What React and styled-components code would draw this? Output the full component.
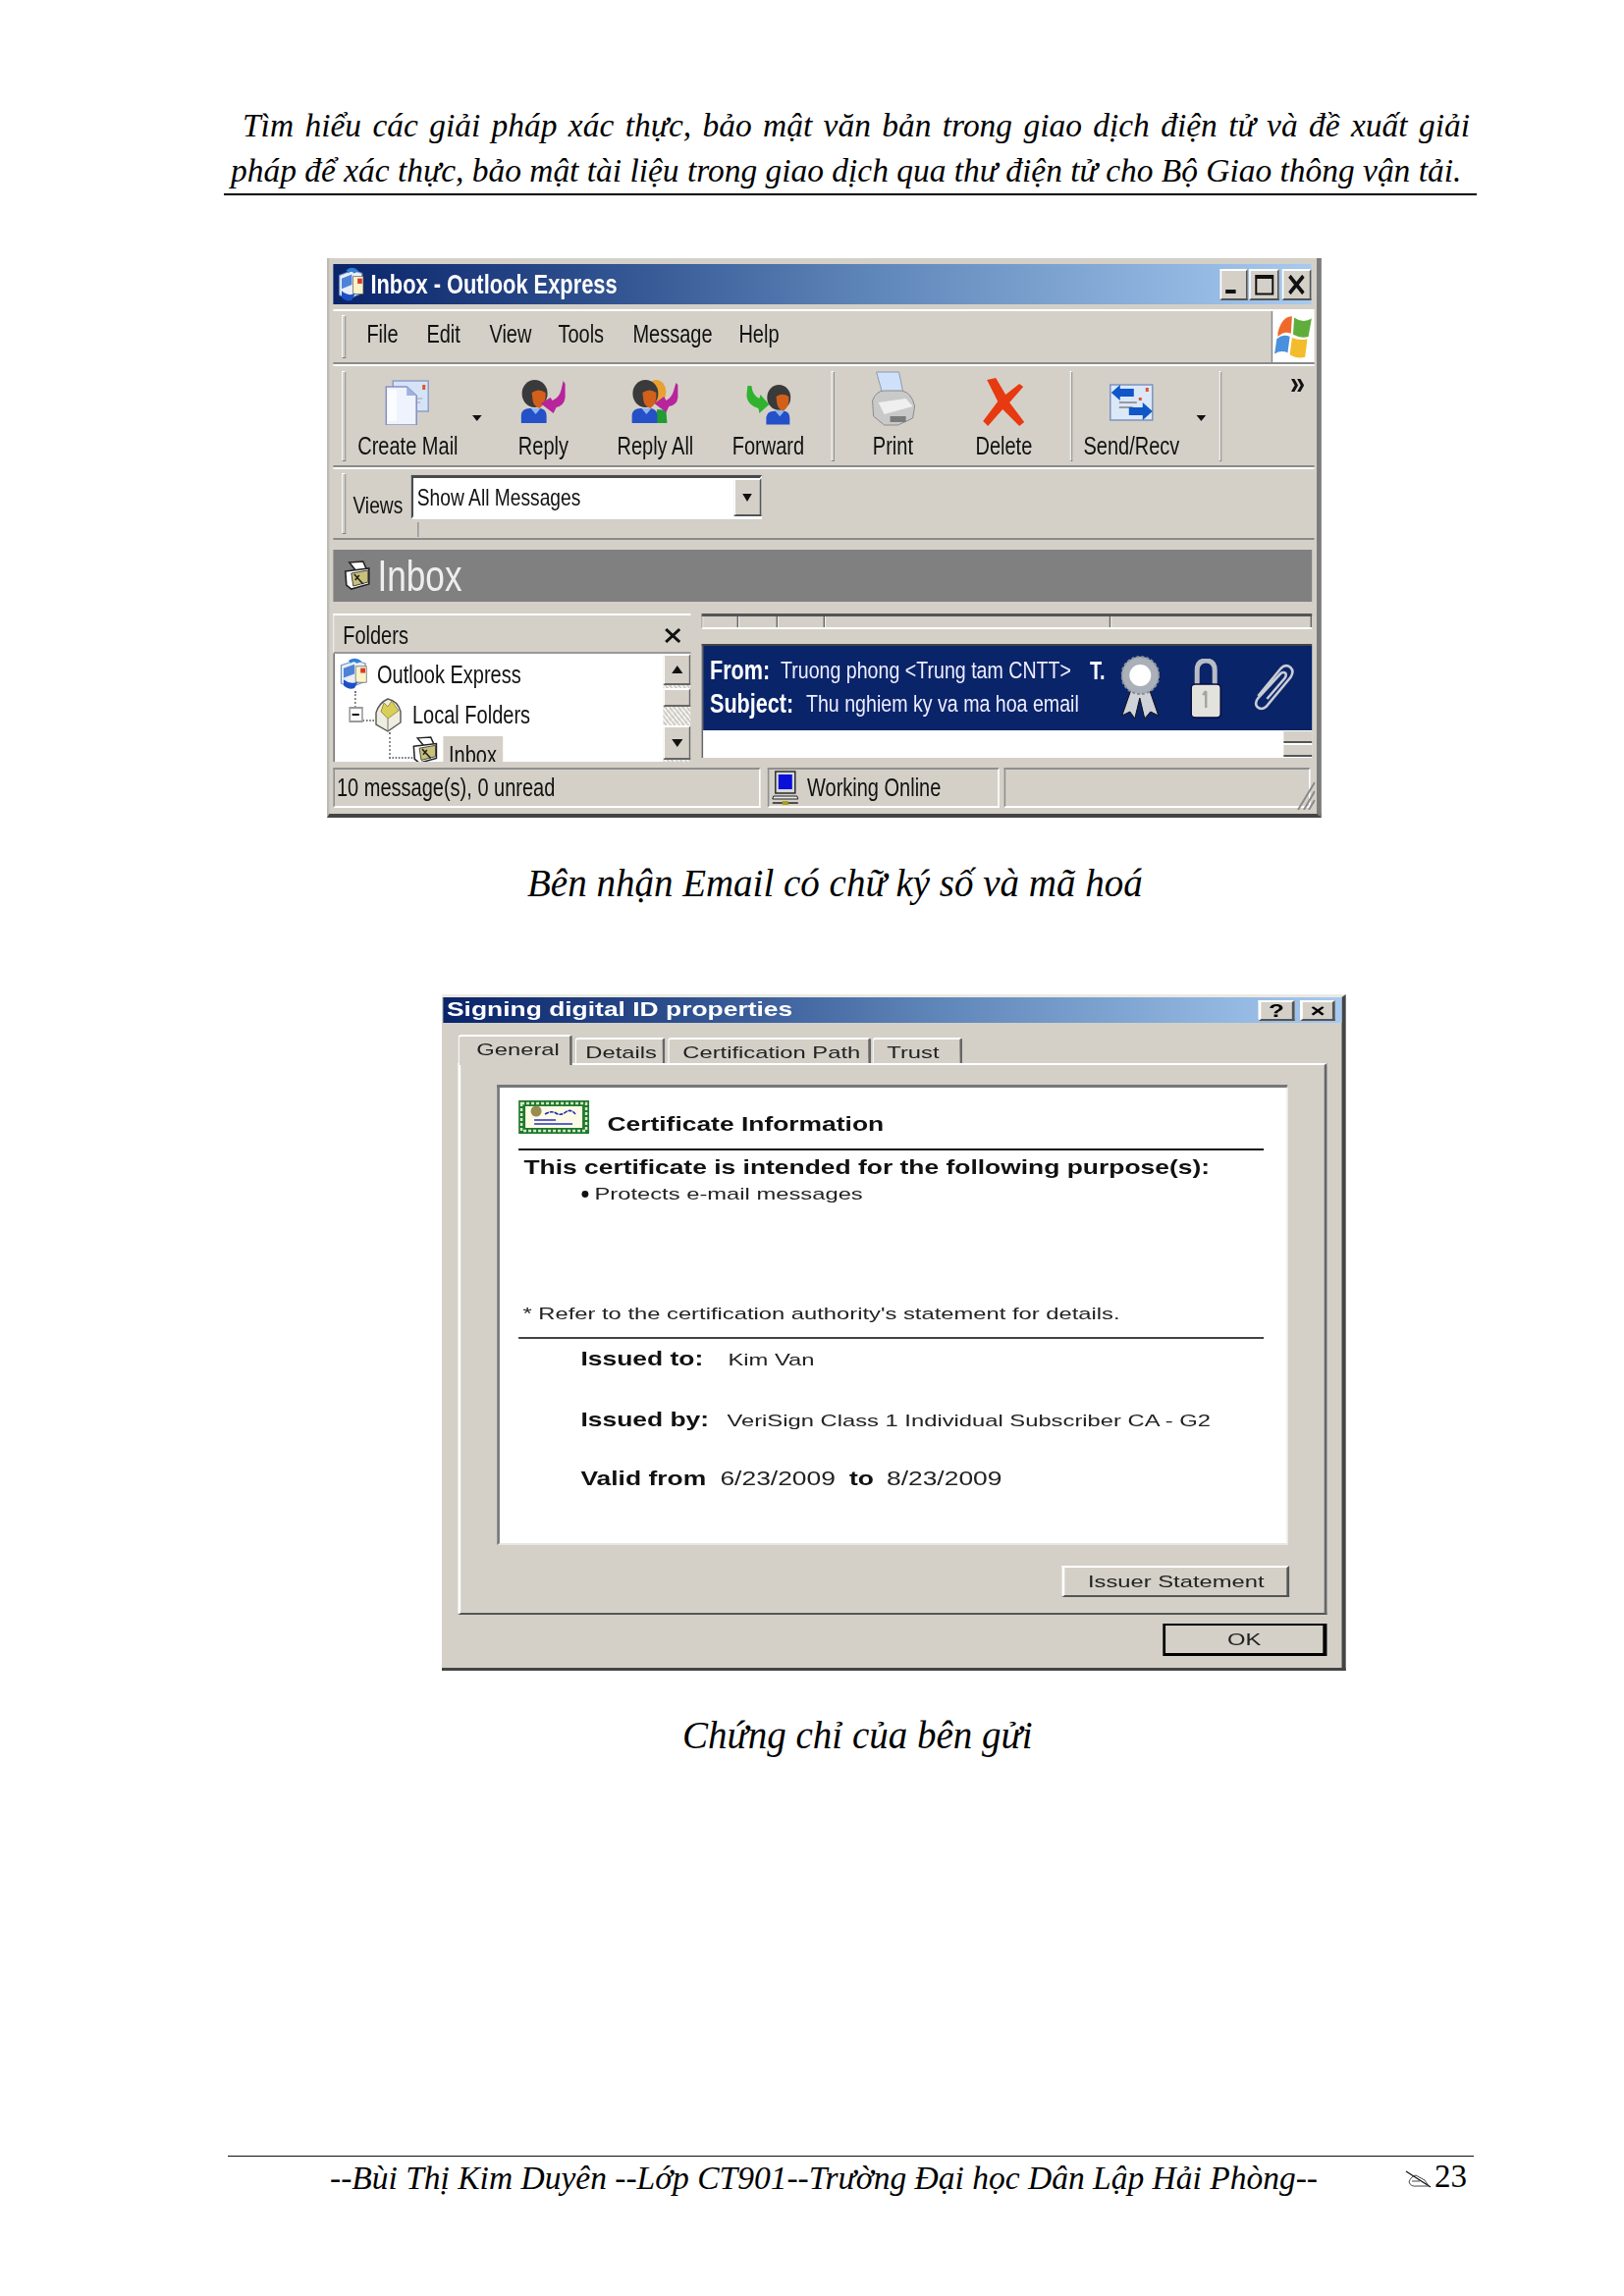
import React from "react";
import styled, { createGlobalStyle } from "styled-components";

const KO = 0.8;
const KD = 1.37;
const XO = (n) => n / KO;
const XD = (n) => n / KD;
const CHROME = "#d4d0c8";
const SANS = '"Liberation Sans", Arial, sans-serif';
const SERIF = '"Liberation Serif", "Times New Roman", serif';

const Global = createGlobalStyle`
  html, body { margin: 0; padding: 0; background: #fff; }
  * { box-sizing: border-box; }
`;

const Page = styled.div`
  width: 1654px; height: 2339px; padding-top: 105px; overflow: hidden; position: relative;
  font-family: ${SERIF}; color: #000;
`;
const RunHead = styled.header`
  width: 1276px; margin-left: 228px; border-bottom: 2px solid #000; padding: 0 7px 0 7px;
`;
const HeadLine = styled.div`
  font-size: 33.45px; line-height: 46px; font-style: italic;
  padding-left: ${(p) => p.$indent || 0}px;
  text-align: ${(p) => (p.$just ? "justify" : "left")};
  text-align-last: ${(p) => (p.$just ? "justify" : "left")};
  white-space: ${(p) => (p.$just ? "normal" : "nowrap")};
`;
const Caption = styled.div`
  margin-left: ${(p) => p.$ml}px; margin-top: ${(p) => p.$mt}px;
  height: 50px; line-height: 50px; font-size: 39px; font-style: italic; white-space: nowrap;
`;

/* ---------- Outlook window ---------- */
const OutlookFrame = styled.div`
  width: 1013px; height: 570px; margin: 64px 0 0 333px; filter: blur(0.45px);
`;
const OutlookBody = styled.div`
  width: ${XO(1013)}px; height: 570px; transform: scaleX(${KO}); transform-origin: left top;
  background: ${CHROME}; font-family: ${SANS}; font-size: 25px; color: #111;
  border-right: 6px solid #7c7c7c; border-bottom: 4px solid #444;
  border-left: ${XO(3)}px solid #bdbbb5;
  padding: 6px ${XO(1)}px 0 ${XO(4)}px; display: flex; flex-direction: column;
`;
const TitleBar = styled.div`
  height: ${(p) => p.$h}px; flex: none; width: ${(p) => p.$w}px;
  background: linear-gradient(90deg, #0a246a 0%, #2c4d8c 25%, #5f86b9 55%, #a6caf0 100%);
  display: flex; align-items: center; color: #fff; font-weight: 700;
`;
const TitleIconSlot = styled.span`
  margin-left: ${XO(4)}px; display: flex; flex: none;
`;
const TitleText = styled.span`
  font-size: 27.3px; margin-left: ${XO(4)}px; white-space: nowrap;
`;
const CaptionBtn = styled.button`
  width: ${(p) => p.$w}px; height: ${(p) => p.$h}px; padding: 0; margin-left: ${(p) => p.$ml}px;
  background: ${CHROME}; color: #000; font: 700 ${(p) => p.$fs}px ${SANS}; line-height: 1;
  border: 2px solid; border-color: #fff #555 #555 #fff;
  display: flex; align-items: center; justify-content: center; flex: none;
`;
const MinBar = styled.span`
  width: ${XO(11)}px; height: 4px; background: #111; margin: 14px ${XO(6)}px 0 0;
`;
const CaptionGroup = styled.div`
  margin-left: auto; display: flex; margin-right: ${(p) => p.$mr}px;
`;
const Band = styled.div`
  height: ${(p) => p.$h}px; margin-top: ${(p) => p.$mt || 0}px; flex: none;
  border-top: 2px solid #fff; border-bottom: 2px solid #8a8a8a;
  padding-left: ${XO(9)}px; display: flex; align-items: ${(p) => p.$align || "center"};
  margin-right: ${XO(2)}px; position: relative;
`;
const Grip = styled.span`
  width: ${XO(4)}px; height: ${(p) => p.$h}px; flex: none; align-self: center;
  margin-right: ${(p) => XO(p.$mr || 0)}px;
  border: 1px solid; border-color: #fff #808080 #808080 #fff;
`;
const MenuItem = styled.span`
  width: ${(p) => XO(p.$w)}px; margin-left: ${(p) => XO(p.$ml || 0)}px; flex: none; white-space: nowrap; padding-bottom: 6px;
`;
const LogoBox = styled.div`
  margin-left: auto; width: ${XO(44)}px; height: 52px; background: #fff; flex: none;
  border-left: ${XO(2)}px solid #8a8a8a; display: flex; align-items: center; justify-content: center;
`;
const Tool = styled.div`
  width: ${(p) => XO(p.$w)}px; height: 100%; flex: none; display: flex; flex-direction: column; align-items: center;
  padding-top: ${(p) => p.$pt}px; position: relative;
`;
const ToolIcon = styled.div`
  height: ${(p) => p.$h}px; display: flex; flex: none;
`;
const ToolLabel = styled.span`
  position: absolute; top: 67px; left: 0; right: 0; text-align: center; white-space: nowrap;
  line-height: 28px;
`;
const DropCell = styled.div`
  width: ${(p) => XO(p.$w)}px; height: 100%; flex: none; display: flex; justify-content: center; padding-top: 50px;
`;
const Tri = styled.span`
  width: 0; height: 0; border-left: ${XO(5)}px solid transparent; border-right: ${XO(5)}px solid transparent;
  border-top: ${(p) => p.$s || 6}px solid #111;
`;
const ToolSep = styled.span`
  width: ${XO(3)}px; height: 92px; flex: none; align-self: center; margin-left: ${(p) => XO(p.$ml || 0)}px;
  margin-right: ${(p) => XO(p.$mr || 0)}px; border: 1px solid; border-color: #fff #808080 #808080 #fff;
`;
const Chevrons = styled.span`
  position: absolute; right: ${XO(9)}px; top: 0; font-weight: 700; font-size: 34px; line-height: 32px;
`;
const ViewsLabel = styled.span`
  margin-left: ${XO(7)}px; margin-top: 4px; width: ${XO(59)}px; flex: none; font-size: 24px;
`;
const Combo = styled.div`
  width: ${XO(358)}px; height: 45px; margin-top: -13px; position: relative; background: #fff; flex: none; font-size: 24px;
  border: 3px solid; border-color: #4a4a4a #fff #fff #4a4a4a; outline: 1px solid #ccc;
  display: flex; align-items: center; padding-left: ${XO(4)}px;
`;
const ComboBtn = styled.span`
  margin-left: auto; width: ${XO(28)}px; height: 39px; background: ${CHROME}; flex: none; margin-right: ${XO(-1)}px;
  border: 2px solid; border-color: #fff #555 #555 #fff; display: flex; align-items: center; justify-content: center;
`;
const ComboTick = styled.span`
  position: absolute; left: ${XO(4)}px; top: 45px; width: ${XO(2)}px; height: 15px; background: #9a9a9a;
`;
const ViewBar = styled.div`
  height: 53px; margin-top: 10px; flex: none; background: #808080; color: #eee;
  display: flex; align-items: center; padding-left: ${XO(10)}px; margin-right: ${XO(4)}px;
`;
const ViewBarText = styled.span`
  font-size: 44px; margin-left: ${XO(7)}px; line-height: 1;
`;
const Panes = styled.div`
  height: 167px; flex: none; display: flex; padding-top: 12px;
`;
const FolderPane = styled.section`
  width: ${XO(364)}px; flex: none; display: flex; flex-direction: column; height: 153px;
`;
const PaneHead = styled.div`
  height: 41px; flex: none; border-top: 2px solid #fff; border-left: ${XO(1)}px solid #fff; border-bottom: 2px solid #999;
  display: flex; align-items: center; padding: 3px ${XO(9)}px 0 ${XO(9)}px; justify-content: space-between;
`;
const TreeWrap = styled.div`
  height: 110px; display: flex; overflow: hidden; border-left: ${XO(2)}px solid #777;
`;
const Tree = styled.div`
  flex: 1; background: #fff; position: relative; overflow: hidden; display: flex; flex-direction: column;
`;
const TreeRow = styled.div`
  height: 41px; flex: none; display: flex; align-items: center; padding-left: ${(p) => XO(p.$pl)}px; white-space: nowrap;
  ${(p) => p.$top && "align-items: flex-start; padding-top: 2px;"}
`;
const TreeText = styled.span`
  margin-left: ${(p) => XO(p.$ml)}px; line-height: 30px;
  ${(p) => p.$sel && `background: ${CHROME}; padding: 4px ${XO(6)}px 0;`}
`;
const TreeGap = styled.span`
  width: ${(p) => XO(p.$w)}px; flex: none;
`;
const TreeLine = styled.span`
  position: absolute; left: ${(p) => XO(p.$l)}px; top: ${(p) => p.$t}px;
  width: ${(p) => (p.$w ? `${XO(p.$w)}px` : "0")}; height: ${(p) => p.$h || 0}px;
  ${(p) => (p.$w ? "border-top" : "border-left")}: 2px dotted #777;
`;
const Expander = styled.span`
  width: ${XO(15)}px; height: 16px; flex: none; background: #fff; border: 2px solid #9a9a9a; position: relative; display: flex; align-items: center; justify-content: center;
  &::after { content: ""; width: 60%; height: 2px; background: #111; }
`;
const Scroll = styled.div`
  width: ${(p) => XO(p.$w)}px; flex: none; display: flex; flex-direction: column; background: #e9e7e1;
  background-image: repeating-linear-gradient(45deg, #cfcdc6 0 2px, #f2f1ed 2px 4px);
`;
const ScrollBtn = styled.div`
  height: ${(p) => p.$h}px; margin-bottom: ${(p) => p.$mb || 0}px; flex: none; background: ${CHROME};
  border: 2px solid; border-color: #fff #666 #666 #fff; display: flex; align-items: center; justify-content: center;
`;
const TriUp = styled.span`
  width: 0; height: 0; border-left: ${XO(6)}px solid transparent; border-right: ${XO(6)}px solid transparent;
  border-${(p) => (p.$down ? "top" : "bottom")}: 8px solid #111;
`;
const RightPane = styled.section`
  width: ${XO(628)}px; margin-left: ${XO(5)}px; flex: none; display: flex; flex-direction: column;
`;
const ColHeads = styled.div`
  height: 16px; display: flex; border-top: 3px solid #555; border-left: ${XO(1)}px solid #888;
  margin-left: ${XO(6)}px; overflow: hidden; border-bottom: 2px solid #fff; background: ${CHROME};
`;
const ColHead = styled.span`
  width: ${(p) => (p.$w ? `${XO(p.$w)}px` : "auto")}; flex: ${(p) => (p.$w ? "none" : "1")};
  border-right: ${XO(2)}px solid #666; border-left: ${XO(1)}px solid #fff;
`;
const PreviewBox = styled.div`
  margin-top: 15px; margin-left: ${XO(6)}px; width: ${XO(622)}px; border-left: ${XO(2)}px solid #666; border-top: 2px solid #444;
`;
const PreviewHead = styled.div`
  height: 86px; background: #0a246a; color: #eef; display: flex; align-items: flex-start; position: relative;
`;
const PreviewText = styled.div`
  padding: 8px 0 0 ${XO(7)}px; width: ${XO(420)}px; flex: none; display: flex; flex-direction: column;
`;
const PreviewLine = styled.div`
  height: 34px; line-height: 34px; white-space: nowrap; display: flex;
`;
const PreviewKey = styled.b`
  font-size: 27px; color: #fff; width: ${(p) => XO(p.$w)}px; flex: none;
`;
const PreviewVal = styled.span`
  font-size: 24.5px; flex: none;
`;
const InitialT = styled.b`
  margin-left: ${XO(19)}px; font-size: 25px; color: #fff;
`;
const PreviewIcon = styled.div`
  flex: none; margin-left: ${(p) => XO(p.$ml)}px; margin-top: ${(p) => p.$mt}px; display: flex;
`;
const PreviewBody = styled.div`
  height: 28px; background: #fff; display: flex; flex-direction: column; align-items: flex-end;
`;
const MiniBtn = styled.span`
  width: ${XO(29)}px; height: 13px; background: ${CHROME}; flex: none; margin-bottom: 1px;
  border-bottom: 2px solid #555; border-top: 1px solid #fff;
`;
const StatusBar = styled.div`
  height: 41px; margin-top: 2px; flex: none; display: flex; position: relative;
`;
const StatusCell = styled.div`
  width: ${(p) => XO(p.$w)}px; margin-right: ${(p) => XO(p.$mr || 0)}px; flex: none; display: flex; align-items: center;
  padding-left: ${(p) => XO(p.$pl || 0)}px; white-space: nowrap;
  border: 2px solid; border-color: #8f8f8f #fff #fff #8f8f8f; border-left-width: ${XO(2)}px;
`;
const StatusText = styled.span`
  margin-left: ${(p) => XO(p.$ml || 0)}px;
`;
const ResizeGrip = styled.div`
  position: absolute; right: ${XO(1)}px; bottom: -2px; display: flex;
`;

/* ---------- Certificate dialog ---------- */
const DialogFrame = styled.div`
  width: 921px; height: 689px; margin: 88px 0 0 450px; filter: blur(0.35px);
`;
const DialogBody = styled.div`
  width: ${XD(921)}px; height: 689px; transform: scaleX(${KD}); transform-origin: left top;
  background: ${CHROME}; font-family: ${SANS}; font-size: 17.35px; color: #222;
  border-right: 3px solid #444; border-bottom: 3px solid #444; border-top: 3px solid #ece9e2;
  padding-left: ${XD(1)}px; display: flex; flex-direction: column;
`;
const DialogTitle = styled.span`
  font-size: 19.3px; font-weight: 700; margin-left: ${XD(4)}px; white-space: nowrap;
`;
const TabStrip = styled.div`
  height: 29px; margin: 12px 0 0 ${XD(15)}px; display: flex; align-items: flex-end; flex: none; position: relative; z-index: 1;
`;
const Tab = styled.div`
  width: ${(p) => XD(p.$w)}px; height: ${(p) => (p.$active ? 31 : 26)}px; margin-right: ${XD(2)}px; flex: none;
  margin-bottom: ${(p) => (p.$active ? -2 : 0)}px; background: ${CHROME}; padding-left: ${(p) => XD(p.$pl)}px;
  line-height: 26px; white-space: nowrap;
  border-top: 2px solid #fff; border-left: ${XD(2)}px solid #fff; border-right: ${XD(3)}px solid #666;
  border-top-left-radius: 3px; border-top-right-radius: 3px;
`;
const TabPanel = styled.div`
  width: ${XD(886)}px; height: 562px; margin-left: ${XD(15)}px; flex: none;
  border: 2px solid; border-color: #fff #666 #555 #fff; padding: 20px ${XD(36)}px 0 ${XD(37)}px;
  display: flex; flex-direction: column;
`;
const CertBox = styled.div`
  width: ${XD(806)}px; height: 469px; flex: none; background: #fff; padding-left: ${XD(20)}px;
  border-top: 3px solid #777; border-left: ${XD(3)}px solid #777;
  border-right: ${XD(2)}px solid #e8e6e0; border-bottom: 2px solid #e8e6e0; color: #222;
`;
const CertHead = styled.div`
  height: 62px; display: flex; align-items: flex-start; padding-top: 13px;
`;
const CertTitle = styled.b`
  margin: 15px 0 0 ${XD(18)}px; line-height: 20px; color: #111; white-space: nowrap; font-size: 19.3px;
`;
const CertRule = styled.div`
  width: ${XD(759)}px; height: 2px; margin-top: ${(p) => p.$mt || 0}px; background: ${(p) => p.$c};
`;
const CertRow = styled.div`
  height: ${(p) => p.$h || 20}px; margin-top: ${(p) => p.$mt || 0}px; margin-left: ${(p) => XD(p.$ml || 0)}px;
  display: flex; align-items: center; white-space: nowrap;
`;
const Strong = styled.b`
  color: #111; font-size: 19.3px; width: ${(p) => (p.$w ? `${XD(p.$w)}px` : "auto")}; flex: none;
`;
const Dot = styled.span`
  width: ${XD(7)}px; height: 7px; border-radius: 50%; background: #111; margin-right: ${XD(6)}px; flex: none;
`;
const PushBtn = styled.button`
  width: ${(p) => XD(p.$w)}px; height: ${(p) => p.$h}px; margin-top: ${(p) => p.$mt}px; margin-left: auto; margin-right: ${(p) => XD(p.$mr || 0)}px;
  padding: 0; flex: none; background: ${CHROME}; color: #222; font: 17.35px ${SANS};
  border: 2px solid; border-color: ${(p) => (p.$def ? "#000" : "#fff #555 #555 #fff")};
  ${(p) => p.$def && "border-bottom-width: 3px; border-right-width: 3px;"}
`;
const DateVal = styled.span`
  flex: none; font-size: 19.3px; margin: 0 ${(p) => XD(p.$mr || 0)}px 0 0;
`;

/* ---------- Footer ---------- */
const FootRule = styled.div`
  width: 1269px; height: 1px; margin: 403px 0 0 232px; background: #111;
`;
const FootRow = styled.footer`
  display: flex; align-items: center; height: 44px; padding: 0 160px 0 336px;
`;
const FootText = styled.span`
  font-size: 33.5px; font-style: italic; white-space: nowrap;
`;
const PageNo = styled.span`
  margin-left: auto; display: flex; align-items: center; font-size: 33px; margin-top: -4px;
`;
const PenSvg = styled.svg`
  margin-right: 3px; margin-top: 6px;
`;

/* ---------- Drawings ---------- */
const ico = (w, h, vw, vh) => ({ width: XO(w), height: h, viewBox: `0 0 ${vw} ${vh}`, preserveAspectRatio: "none" });

const AppIcon = ({ w = 30, h = 38 }) => (
  <svg {...ico(w, h, 26, 36)}>
    <path d="M2 9 L14 4 L22 7 V26 L10 32 L2 28 Z" fill="#e9eef8" stroke="#6f8fc4" />
    <path d="M4 12 L13 8 V18 L4 22 Z" fill="#4d82d6" />
    <path d="M14 10 H23 V27 H14 Z" fill="#fbf3c9" stroke="#555" strokeWidth=".6" />
    <rect x="18" y="12" width="4" height="5" fill="#d93a2b" />
    <path d="M8 4 Q14 -1 19 5 L15 7 Q12 4 10 7 Z" fill="#2f7fd6" />
    <path d="M4 24 Q10 30 16 26 L13 33 Q8 35 4 30 Z" fill="#1f4fc4" />
  </svg>
);
const XMark = ({ w, h, sw }) => (
  <svg {...ico(w, h, 18, 16)}>
    <path d="M2 1 L16 15 M16 1 L2 15" stroke="#111" strokeWidth={sw} />
  </svg>
);
const CreateMailIcon = () => (
  <svg {...ico(46, 46, 46, 46)}>
    <rect x="8" y="1" width="36" height="31" fill="#d5e3f6" stroke="#8d9ec9" strokeWidth="1.5" />
    <rect x="38" y="5" width="3" height="5" fill="#e0552f" />
    <path d="M30 19 H38 M30 23 H36" stroke="#9aa" />
    <path d="M1 7 H22 L32 16 V46 H1 Z" fill="#eef3fd" stroke="#8a8fc4" strokeWidth="1.6" />
    <path d="M22 7 V16 H32 Z" fill="#9fb2de" />
    <path d="M3 10 H12 V42 H3 Z" fill="#fff" opacity=".7" />
  </svg>
);
const Person = ({ x = 0, y = 0, s = 1 }) => (
  <g transform={`translate(${x} ${y}) scale(${s})`}>
    <ellipse cx="14" cy="14" rx="13" ry="14" fill="#3a3a3a" />
    <path d="M11 13 Q18 8 25 13 Q26 24 19 29 Q13 27 12 21 Z" fill="#d2601a" />
    <path d="M0 44 V36 Q1 29 9 29 H20 Q26 30 26 37 V44 Z" fill="#2450c8" />
    <path d="M10 29 L15 35 L20 29 Z" fill="#8fb6ee" />
  </g>
);
const ReplyIcon = () => (
  <svg {...ico(46, 44, 46, 44)}>
    <Person />
    <path d="M43 1 L45 4 V18 Q44 26 36 28 L33 34 L20 24 L30 18 L32 21 Q39 18 41 10 Z" fill="#b8249c" />
  </svg>
);
const ReplyAllIcon = () => (
  <svg {...ico(48, 44, 48, 44)}>
    <ellipse cx="25" cy="12" rx="10" ry="12" fill="#e8a032" />
    <path d="M22 44 L26 30 L35 31 L36 44 Z" fill="#1f9c34" />
    <Person />
    <path d="M45 3 L47 5 V18 Q46 26 38 27 L35 33 L23 24 L33 17 L35 21 Q41 18 43 10 Z" fill="#b8249c" />
  </svg>
);
const ForwardIcon = () => (
  <svg {...ico(46, 42, 46, 42)}>
    <path d="M2 2 L6 2 Q7 12 14 15 L15 11 L24 21 L14 30 L13 25 Q2 22 1 12 Z" fill="#2fb32f" />
    <Person x="21" y="1" s=".92" />
  </svg>
);
const PrintIcon = () => (
  <svg {...ico(46, 56, 46, 56)}>
    <path d="M6 1 H29 L34 26 H13 Z" fill="#cfe1fa" stroke="#8e9ab0" />
    <path d="M2 30 Q6 20 14 20 H32 Q42 22 45 36 L43 48 L28 55 H14 L3 46 Z" fill="#c9c9c9" stroke="#8b8b8b" />
    <path d="M8 32 L36 28 L43 36 L14 44 Z" fill="#efefef" />
    <rect x="20" y="46" width="16" height="6" fill="#7a7a7a" />
  </svg>
);
const DeleteIcon = () => (
  <svg {...ico(44, 50, 44, 50)}>
    <path d="M5 2 L14 0 L24 17 L38 6 L42 9 L28 25 L43 45 L38 49 L21 32 L6 49 L1 44 L16 24 Z" fill="#e83a10" />
  </svg>
);
const SendRecvIcon = () => (
  <svg {...ico(46, 38, 46, 38)}>
    <rect x="1" y="1" width="43" height="36" fill="#dbe8f8" stroke="#7e93bd" strokeWidth="1.5" />
    <path d="M10 19 H28 M10 24 H24" stroke="#9a9aa0" strokeWidth="2" />
    <rect x="37" y="4" width="3" height="4" fill="#e0552f" />
    <rect x="30" y="14" width="3" height="3" fill="#e0552f" />
    <path d="M2 9 L11 1 V5 H25 V13 H11 V17 Z" fill="#0f57c8" />
    <path d="M44 28 L34 37 V32 H20 V24 H34 V19 Z" fill="#0f57c8" />
  </svg>
);
const Flag = () => (
  <svg {...ico(40, 50, 36, 46)}>
    <path d="M4 19 Q8 4 17 4 L16 20 Q10 17 4 23 Z" fill="#ee6a2b" />
    <path d="M19 5 Q27 11 35 6 L32 23 Q25 25 18 21 Z" fill="#5fae3c" />
    <path d="M3 25 Q9 20 15 23 L13 38 Q7 35 1 39 Z" fill="#4a90dc" />
    <path d="M17 24 Q24 27 31 25 L29 42 Q22 44 15 40 Z" fill="#f3bc2a" />
  </svg>
);
const SmallInbox = ({ w = 28, h = 32 }) => (
  <svg {...ico(w, h, 28, 32)}>
    <path d="M6 2 L20 1 L24 10 L14 12 Z" fill="#fff" stroke="#222" strokeWidth="1.6" />
    <path d="M2 11 L26 8 V24 L8 29 L3 25 Z" fill="#fff" stroke="#222" strokeWidth="1.6" />
    <path d="M8 13 L25 10 V22 L10 26 Z" fill="#c9c07a" stroke="#444" />
    <path d="M11 14 L20 24 M12 20 L16 15" stroke="#222" strokeWidth="1.6" />
  </svg>
);
const LocalFoldersIcon = () => (
  <svg {...ico(28, 36, 28, 36)}>
    <path d="M2 16 Q5 6 14 2 Q24 4 27 15 V26 L14 35 L2 28 Z" fill="#efece0" stroke="#555" strokeWidth="1.4" />
    <path d="M7 15 L10 6 L14 10 L18 4 L22 10 L25 14 L14 22 Z" fill="#d9cf58" stroke="#8a8030" strokeWidth=".8" />
    <path d="M14 22 V35" stroke="#777" />
  </svg>
);
const MonitorIcon = () => (
  <svg {...ico(28, 36, 28, 36)}>
    <rect x="4" y="1" width="20" height="22" fill="#d8d8d8" stroke="#222" strokeWidth="1.4" />
    <rect x="7" y="4" width="14" height="15" fill="#0a10d8" />
    <path d="M2 26 H26 L27 29 H1 Z" fill="#e8e8e8" stroke="#222" />
    <path d="M1 33 H27" stroke="#222" strokeWidth="1.5" />
    <rect x="11" y="31" width="6" height="4" fill="#a8a020" />
  </svg>
);
const Ribbon = () => (
  <svg {...ico(39, 66, 39, 66)}>
    <path d="M10 36 L1 62 L9 58 L14 65 L19 44 L24 65 L30 58 L38 62 L29 36 Z" fill="#cfd2d8" stroke="#111" />
    <circle cx="19.5" cy="21" r="19" fill="#aab0ba" stroke="#8a8f98" strokeDasharray="3 2" strokeWidth="2" />
    <circle cx="19.5" cy="21" r="11" fill="#fff" />
  </svg>
);
const Lock = () => (
  <svg {...ico(32, 62, 32, 62)}>
    <path d="M7 28 V12 Q7 2 16 2 Q25 2 25 12 V28" fill="none" stroke="#b9bcc4" strokeWidth="5" />
    <rect x="1" y="26" width="30" height="34" rx="4" fill="#e3e3dd" stroke="#050a3a" strokeWidth="1.5" />
    <path d="M16 33 V50 M13 37 L16 33" stroke="#a3a69e" strokeWidth="2.5" fill="none" />
  </svg>
);
const Clip = () => (
  <svg {...ico(44, 52, 44, 52)}>
    <path d="M6 34 L29 6 Q34 1 39 5 Q43 9 39 15 L14 45 Q9 49 5 45 Q2 41 6 36 L29 11 Q32 9 34 11 Q35 13 33 16 L15 37"
      fill="none" stroke="#c9ccd4" strokeWidth="2.6" />
  </svg>
);
const ResizeLines = () => (
  <svg {...ico(18, 30, 18, 30)}>
    <path d="M18 2 L1 30 M18 11 L7 30 M18 20 L12 30" stroke="#8a8a8a" strokeWidth="2" />
  </svg>
);
const CertIcon = () => (
  <svg width={XD(72)} height="34" viewBox="0 0 72 34" preserveAspectRatio="none">
    <rect x="0" y="0" width="72" height="34" fill="#1e7a2c" />
    <rect x="3" y="3" width="66" height="28" fill="none" stroke="#d9e8c8" strokeWidth="2.5" strokeDasharray="3 2" />
    <rect x="7" y="6" width="58" height="22" fill="#fdfbe6" />
    <circle cx="18" cy="11" r="5.5" fill="#9a8c50" />
    <path d="M27 14 Q33 10 38 13 T48 12 T58 14" stroke="#1a2ab0" fill="none" strokeWidth="1.6" strokeDasharray="4 1" />
    <path d="M16 20 H38 M16 24 H55" stroke="#2232c8" strokeWidth="1.6" />
  </svg>
);
const PenIcon = () => (
  <PenSvg width="27" height="18" viewBox="0 0 27 18">
    <path d="M1 1 L26 17" stroke="#111" strokeWidth="1.2" />
    <path d="M4 12 Q6 6 11 5 L20 10 L24 16 H12 Q6 17 4 12 Z M7 11 H15" fill="none" stroke="#333" strokeWidth=".9" />
  </PenSvg>
);

const TOOLS = [
  { label: "Create Mail", w: 120, pt: 14, h: 46, Icon: CreateMailIcon, drop: 20 },
  { label: "Reply", w: 116, pt: 14, h: 44, Icon: ReplyIcon },
  { label: "Reply All", w: 112, pt: 14, h: 44, Icon: ReplyAllIcon },
  { label: "Forward", w: 118, pt: 18, h: 42, Icon: ForwardIcon, sep: [5, 0] },
  { label: "Print", w: 120, pt: 5, h: 56, Icon: PrintIcon },
  { label: "Delete", w: 106, pt: 12, h: 50, Icon: DeleteIcon, sep: [14, 3] },
  { label: "Send/Recv", w: 114, pt: 18, h: 38, Icon: SendRecvIcon, drop: 28, sep: [4, 0] },
];
const MENU = [["Edit", 64], ["View", 70], ["Tools", 76], ["Message", 108], ["Help", 50]];

function OutlookWindow() {
  return (
    <OutlookFrame>
      <OutlookBody>
        <TitleBar $w={XO(996)} $h={41}>
          <TitleIconSlot><AppIcon /></TitleIconSlot>
          <TitleText>Inbox - Outlook Express</TitleText>
          <CaptionGroup $mr={0}>
            <CaptionBtn $w={XO(28)} $h={32} $ml={0} $fs={30}><MinBar /></CaptionBtn>
            <CaptionBtn $w={XO(30)} $h={32} $ml={XO(2)} $fs={30}>
              <svg width={XO(20)} height="22" viewBox="0 0 20 22" preserveAspectRatio="none"><rect x="1.5" y="2" width="17" height="18.5" fill="none" stroke="#111" strokeWidth="2" /><rect x="1" y="1" width="18" height="4" fill="#111" /></svg>
            </CaptionBtn>
            <CaptionBtn $w={XO(30)} $h={32} $ml={XO(3)} $fs={30}><XMark w={18} h={20} sw={3.4} /></CaptionBtn>
          </CaptionGroup>
        </TitleBar>

        <Band $mt={5} $h={56}>
          <Grip $h={44} />
          <MenuItem $w={61} $ml={21}>File</MenuItem>
          {MENU.map(([t, w]) => <MenuItem key={t} $w={w}>{t}</MenuItem>)}
          <LogoBox><Flag /></LogoBox>
        </Band>

        <Band $h={105} $align="stretch">
          <Grip $h={92} $mr={3} />
          {TOOLS.map(({ label, w, pt, h, Icon, drop, sep }) => (
            <React.Fragment key={label}>
              <Tool $w={w} $pt={pt}>
                <ToolIcon $h={h}><Icon /></ToolIcon>
                <ToolLabel>{label}</ToolLabel>
              </Tool>
              {drop && <DropCell $w={drop}><Tri /></DropCell>}
              {sep && <ToolSep $ml={sep[0]} $mr={sep[1]} />}
            </React.Fragment>
          ))}
          <Chevrons>»</Chevrons>
        </Band>

        <Band $h={74}>
          <Grip $h={62} />
          <ViewsLabel>Views</ViewsLabel>
          <Combo>
            Show All Messages
            <ComboBtn><Tri $s={8} /></ComboBtn>
            <ComboTick />
          </Combo>
        </Band>

        <ViewBar>
          <SmallInbox />
          <ViewBarText>Inbox</ViewBarText>
        </ViewBar>

        <Panes>
          <FolderPane>
            <PaneHead>Folders<XMark w={18} h={15} sw={3} /></PaneHead>
            <TreeWrap>
              <Tree>
                <TreeLine $l={20} $t={38} $h={20} />
                <TreeLine $l={28} $t={67} $w={12} />
                <TreeLine $l={55} $t={80} $h={27} />
                <TreeLine $l={55} $t={105} $w={24} />
                <TreeRow $pl={4}><AppIcon w={32} h={35} /><TreeText $ml={7}>Outlook Express</TreeText></TreeRow>
                <TreeRow $pl={14}>
                  <Expander />
                  <TreeGap $w={11} />
                  <LocalFoldersIcon />
                  <TreeText $ml={11}>Local Folders</TreeText>
                </TreeRow>
                <TreeRow $pl={78} $top>
                  <SmallInbox w={27} h={30} />
                  <TreeText $ml={5} $sel>Inbox</TreeText>
                </TreeRow>
              </Tree>
              <Scroll $w={28}>
                <ScrollBtn $h={32} $mb={3}><TriUp /></ScrollBtn>
                <ScrollBtn $h={19} $mb={19} />
                <ScrollBtn $h={35}><TriUp $down /></ScrollBtn>
              </Scroll>
            </TreeWrap>
          </FolderPane>
          <RightPane>
            <ColHeads>
              <ColHead $w={37} /><ColHead $w={40} /><ColHead $w={48} /><ColHead $w={291} /><ColHead />
            </ColHeads>
            <PreviewBox>
              <PreviewHead>
                <PreviewText>
                  <PreviewLine>
                    <PreviewKey $w={72}>From:</PreviewKey>
                    <PreviewVal>Truong phong &lt;Trung tam CNTT&gt;</PreviewVal>
                    <InitialT>T.</InitialT>
                  </PreviewLine>
                  <PreviewLine>
                    <PreviewKey $w={98}>Subject:</PreviewKey>
                    <PreviewVal>Thu nghiem ky va ma hoa email</PreviewVal>
                  </PreviewLine>
                </PreviewText>
                <PreviewIcon $ml={6} $mt={9}><Ribbon /></PreviewIcon>
                <PreviewIcon $ml={31} $mt={13}><Lock /></PreviewIcon>
                <PreviewIcon $ml={31} $mt={17}><Clip /></PreviewIcon>
              </PreviewHead>
              <PreviewBody><MiniBtn /><MiniBtn /></PreviewBody>
            </PreviewBox>
          </RightPane>
        </Panes>

        <StatusBar>
          <StatusCell $w={435} $mr={7} $pl={2}>10 message(s), 0 unread</StatusCell>
          <StatusCell $w={236} $mr={5} $pl={3}><MonitorIcon /><StatusText $ml={8}>Working Online</StatusText></StatusCell>
          <StatusCell $w={312} />
          <ResizeGrip><ResizeLines /></ResizeGrip>
        </StatusBar>
      </OutlookBody>
    </OutlookFrame>
  );
}

function CertDialog() {
  return (
    <DialogFrame>
      <DialogBody>
        <TitleBar $w={XD(916)} $h={26}>
          <DialogTitle>Signing digital ID properties</DialogTitle>
          <CaptionGroup $mr={XD(7)}>
            <CaptionBtn $w={XD(36)} $h={21} $ml={0} $fs={19}>?</CaptionBtn>
            <CaptionBtn $w={XD(36)} $h={21} $ml={XD(6)} $fs={19}>×</CaptionBtn>
          </CaptionGroup>
        </TitleBar>
        <TabStrip>
          <Tab $w={117} $pl={18} $active>General</Tab>
          <Tab $w={93} $pl={10}>Details</Tab>
          <Tab $w={207} $pl={14}>Certification Path</Tab>
          <Tab $w={91} $pl={13}>Trust</Tab>
        </TabStrip>
        <TabPanel>
          <CertBox>
            <CertHead>
              <CertIcon />
              <CertTitle>Certificate Information</CertTitle>
            </CertHead>
            <CertRule $c="#111" />
            <CertRow $h={36} $ml={5}><Strong>This certificate is intended for the following purpose(s):</Strong></CertRow>
            <CertRow $h={16} $ml={64}><Dot />Protects e-mail messages</CertRow>
            <CertRow $mt={104} $ml={4}>* Refer to the certification authority's statement for details.</CertRow>
            <CertRule $mt={14} $c="#444" />
            <CertRow $mt={11} $ml={63}><Strong $w={150}>Issued to:</Strong>Kim Van</CertRow>
            <CertRow $mt={42} $ml={63}><Strong $w={149}>Issued by:</Strong>VeriSign Class 1 Individual Subscriber CA - G2</CertRow>
            <CertRow $mt={40} $ml={63}>
              <Strong $w={142}>Valid from</Strong>
              <DateVal $mr={14}>6/23/2009</DateVal>
              <Strong $w={38}>to</Strong>
              <DateVal>8/23/2009</DateVal>
            </CertRow>
          </CertBox>
          <PushBtn $w={231} $h={32} $mt={21}>Issuer Statement</PushBtn>
        </TabPanel>
        <PushBtn $w={168} $h={33} $mt={9} $mr={15} $def>OK</PushBtn>
      </DialogBody>
    </DialogFrame>
  );
}

export default function App() {
  return (
    <Page>
      <Global />
      <RunHead>
        <HeadLine $just $indent={12}>Tìm hiểu các giải pháp xác thực, bảo mật văn bản trong giao dịch điện tử và đề xuất giải</HeadLine>
        <HeadLine>pháp để xác thực, bảo mật tài liệu trong giao dịch qua thư điện tử cho Bộ Giao thông vận tải.</HeadLine>
      </RunHead>
      <OutlookWindow />
      <Caption $ml={537} $mt={42}>Bên nhận Email có chữ ký số và mã hoá</Caption>
      <CertDialog />
      <Caption $ml={695} $mt={41}>Chứng chỉ của bên gửi</Caption>
      <FootRule />
      <FootRow>
        <FootText>--Bùi Thị Kim Duyên --Lớp CT901--Trường Đại học Dân Lập Hải Phòng--</FootText>
        <PageNo><PenIcon />23</PageNo>
      </FootRow>
    </Page>
  );
}
